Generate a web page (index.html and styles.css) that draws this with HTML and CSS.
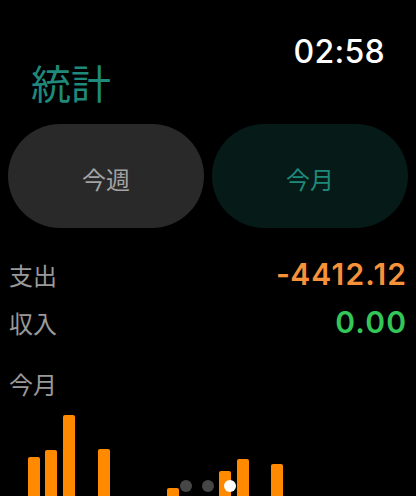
FILE: index.html
```html
<!DOCTYPE html>
<html lang="ja">
<head>
<meta charset="utf-8">
<link rel="stylesheet" href="styles.css">
</head>
<body>
<div class="screen">
  <div class="status"><span class="time">02:58</span></div>
  <h1 class="title">統計</h1>
  <div class="seg">
    <div class="btn btn-week">今週</div>
    <div class="btn btn-month">今月</div>
  </div>
  <div class="row">
    <span class="label">支出</span>
    <span class="value expense"><span class="sign">-</span>4412.12</span>
  </div>
  <div class="row">
    <span class="label">収入</span>
    <span class="value income">0.00</span>
  </div>
  <div class="section">今月</div>
  <div class="chart">
    <div class="bar" style="height:43px"></div>
    <div class="bar" style="height:50px"></div>
    <div class="bar" style="height:85px"></div>
    <div class="bar empty"></div>
    <div class="bar" style="height:51px"></div>
    <div class="bar empty"></div>
    <div class="bar empty"></div>
    <div class="bar empty"></div>
    <div class="bar" style="height:12px"></div>
    <div class="bar empty"></div>
    <div class="bar empty"></div>
    <div class="bar" style="height:29px"></div>
    <div class="bar" style="height:41px"></div>
    <div class="bar empty"></div>
    <div class="bar" style="height:36px"></div>
  </div>
  <div class="dots">
    <span class="dot"></span>
    <span class="dot"></span>
    <span class="dot on"></span>
  </div>
</div>
</body>
</html>
```
FILE: styles.css
```css
html, body {
  margin: 0;
  padding: 0;
  background: #000;
}
body {
  width: 416px;
  height: 496px;
  overflow: hidden;
  font-family: "Noto Sans CJK JP", "Noto Sans", sans-serif;
}
.screen {
  position: relative;
  width: 416px;
  height: 496px;
  overflow: hidden;
}
.status {
  display: flex;
  justify-content: flex-end;
  padding: 36px 31px 0 0;
  height: 32px;
}
.time {
  font-family: Inter, "Noto Sans", sans-serif;
  font-weight: 500;
  font-size: 32px;
  line-height: 32px;
  color: #fff;
  letter-spacing: 0.3px;
}
.title {
  margin: -6px 0 0 31px;
  font-size: 40px;
  line-height: 40px;
  font-weight: 400;
  color: #1f8a7b;
}
.seg {
  display: flex;
  gap: 8px;
  padding: 0 8px;
  margin-top: 22px;
}
.btn {
  flex: 1;
  height: 104px;
  border-radius: 52px;
  display: flex;
  align-items: center;
  justify-content: center;
  font-size: 24px;
  padding-top: 4px;
  box-sizing: border-box;
}
.btn-week {
  background: #29292a;
  color: #a3a3a3;
}
.btn-month {
  background: #061a17;
  color: #1f8a7b;
}
.row {
  display: flex;
  justify-content: space-between;
  align-items: center;
  padding: 0 8.8px 0 9px;
  height: 48px;
}
.seg + .row {
  margin-top: 22px;
}
.label {
  font-size: 24px;
  color: #9a9a9a;
}
.value {
  font-family: Inter, "Noto Sans", sans-serif;
  font-weight: 600;
  font-size: 30px;
  letter-spacing: 1.2px;
}
.sign {
  letter-spacing: 0.2px;
}
.expense { color: #f7923a; }
.income { color: #33c659; }
.section {
  padding-left: 9px;
  margin-top: 22px;
  font-size: 24px;
  line-height: 32px;
  color: #9a9a9a;
}
.chart {
  display: flex;
  align-items: flex-end;
  gap: 5.4px;
  padding-left: 28px;
  height: 100px;
}
.bar {
  width: 12px;
  flex: none;
  background: #ff8a00;
  border-radius: 2px 2px 0 0;
}
.bar.empty {
  height: 0;
  background: transparent;
}
.dots {
  position: absolute;
  left: 0;
  right: 0;
  top: 480px;
  display: flex;
  justify-content: center;
  gap: 10px;
}
.dot {
  width: 12px;
  height: 12px;
  border-radius: 50%;
  background: #464646;
}
.dot.on {
  background: #fff;
}
```
